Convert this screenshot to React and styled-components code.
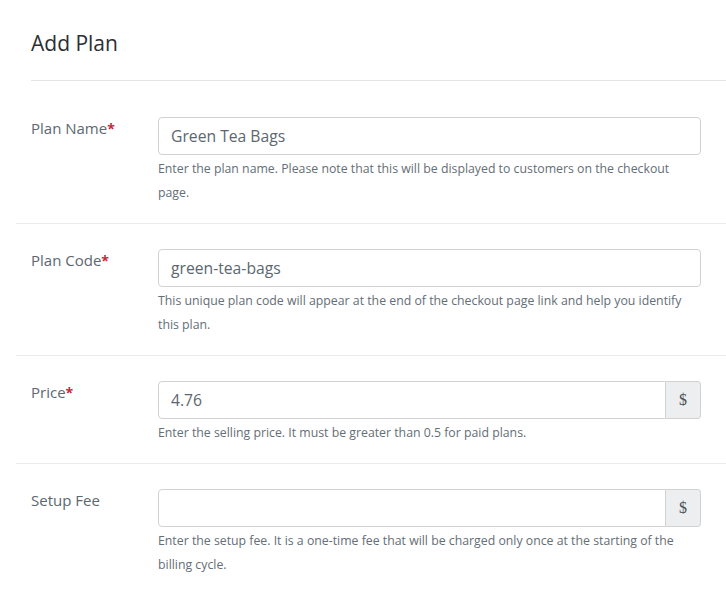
import React from "react";
import styled, { createGlobalStyle } from "styled-components";

const Global = createGlobalStyle`
  html, body { margin: 0; padding: 0; background: #fff; }
  body { font-family: "Open Sans", "Lato", sans-serif; -webkit-font-smoothing: antialiased; }
  * { box-sizing: border-box; }
`;

const Page = styled.div`
  padding-left: 16px;
  width: 726px;
`;

const Header = styled.div`
  margin-left: 15px;
  height: 81px;
  border-bottom: 1px solid #e5e5e5;
  display: flex;
  align-items: flex-start;
  padding-top: 29px;
`;

const Title = styled.h1`
  margin: 0;
  font-family: "Open Sans", sans-serif;
  font-weight: 400;
  font-size: 21px;
  line-height: 28px;
  color: #2b2f33;
`;

const Form = styled.div`
  padding-top: 11px;
`;

const Row = styled.div`
  display: grid;
  grid-template-columns: 127px 543px;
  padding: 25px 0 18px 15px;
  border-bottom: ${(p) => (p.$last ? "none" : "1px solid #ebebeb")};
`;

const Label = styled.label`
  font-family: "Open Sans", sans-serif;
  font-size: 15px;
  line-height: 22px;
  color: #5c6770;
`;

const Req = styled.span`
  color: #c8283c;
  font-weight: 700;
  font-size: 14px;
`;

const Field = styled.div`
  display: flex;
  flex-direction: column;
`;

const Group = styled.div`
  display: flex;
  height: 38px;
`;

const Input = styled.input`
  flex: 1;
  min-width: 0;
  height: 38px;
  border: 1px solid #d2d2d2;
  border-radius: ${(p) => (p.$addon ? "4px 0 0 4px" : "4px")};
  padding: 0 12px;
  font-family: "Open Sans", sans-serif;
  font-size: 15.7px;
  color: #5c6770;
  background: #fff;
  outline: none;
`;

const Addon = styled.span`
  width: 35px;
  height: 38px;
  display: flex;
  align-items: center;
  justify-content: center;
  background: #eceeef;
  border: 1px solid #d2d2d2;
  border-left: none;
  border-radius: 0 4px 4px 0;
  font-family: "Liberation Serif", serif;
  font-size: 16px;
  color: #4a4f54;
`;

const Help = styled.p`
  margin: 2px 0 0;
  font-family: "Open Sans", sans-serif;
  font-size: 12.3px;
  line-height: 24px;
  color: #646e76;
`;

const fields = [
  {
    label: "Plan Name",
    req: true,
    value: "Green Tea Bags",
    help: (
      <>
        Enter the plan name. Please note that this will be displayed to customers on the checkout
        <br />
        page.
      </>
    ),
  },
  {
    label: "Plan Code",
    req: true,
    value: "green-tea-bags",
    help: "This unique plan code will appear at the end of the checkout page link and help you identify this plan.",
  },
  {
    label: "Price",
    req: true,
    value: "4.76",
    addon: "$",
    help: "Enter the selling price. It must be greater than 0.5 for paid plans.",
  },
  {
    label: "Setup Fee",
    value: "",
    addon: "$",
    help: "Enter the setup fee. It is a one-time fee that will be charged only once at the starting of the billing cycle.",
  },
];

export default function App() {
  return (
    <>
      <Global />
      <Page>
        <Header>
          <Title>Add Plan</Title>
        </Header>
        <Form>
          {fields.map((f, i) => (
            <Row key={f.label} $last={i === fields.length - 1}>
              <Label>
                {f.label}
                {f.req && <Req>*</Req>}
              </Label>
              <Field>
                <Group>
                  <Input $addon={!!f.addon} defaultValue={f.value} readOnly />
                  {f.addon && <Addon>{f.addon}</Addon>}
                </Group>
                <Help>{f.help}</Help>
              </Field>
            </Row>
          ))}
        </Form>
      </Page>
    </>
  );
}
